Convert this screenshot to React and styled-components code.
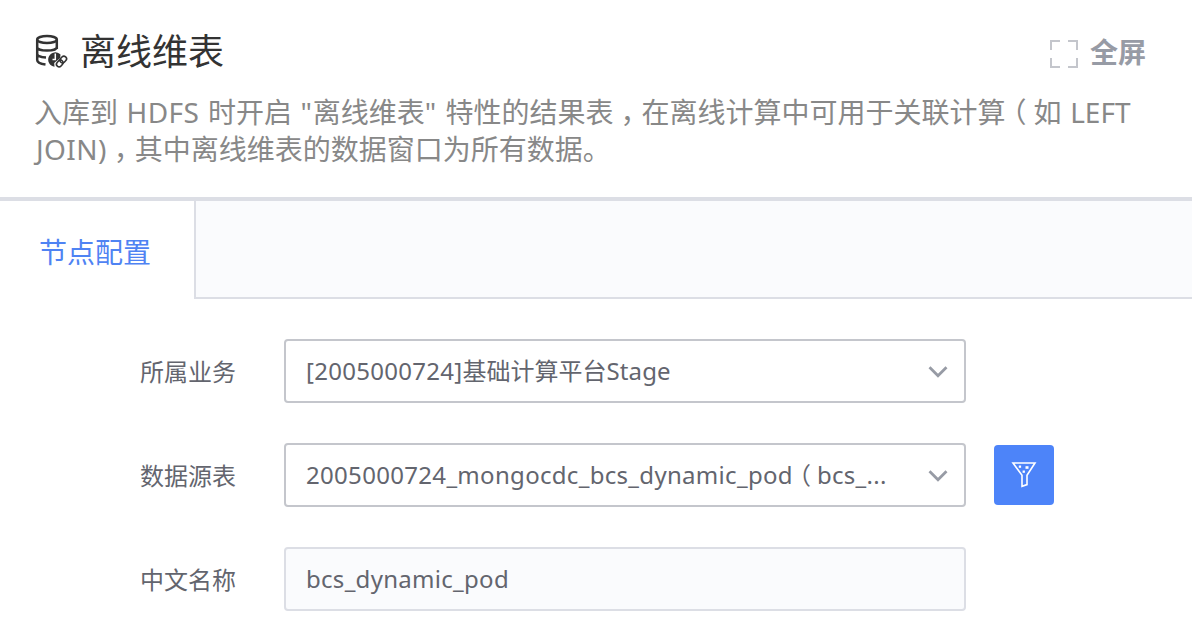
import React from 'react';
import styled, { createGlobalStyle } from 'styled-components';

const GlobalStyle = createGlobalStyle`
  * { box-sizing: border-box; }
  body {
    margin: 0;
    background: #fff;
    color: #63656e;
    font-family: "Noto Sans", "Noto Sans CJK SC", sans-serif;
    overflow: hidden;
  }
`;

const Page = styled.main`
  width: 1192px;
  height: 636px;
  overflow: hidden;
`;

const Header = styled.header`
  height: 201px;
  padding: 25px 34px 0;
  border-bottom: 4px solid #dcdee5;
`;

const TitleRow = styled.div`
  display: flex;
  align-items: center;
  height: 48px;

  > svg { margin-top: 3px; }
`;

const Title = styled.h1`
  margin: 0 0 0 12px;
  flex: 1;
  color: #333;
  font-size: 36px;
  font-weight: 400;
  line-height: 48px;
  font-family: "Noto Sans CJK SC", sans-serif;
`;

const FullScreen = styled.button`
  display: flex;
  align-items: center;
  gap: 11px;
  margin: 3px 12px 0 0;
  padding: 0;
  border: 0;
  background: none;
  color: #979ba5;
  font: 700 28px/40px "Noto Sans CJK SC", sans-serif;

  svg { margin-top: 7px; }
`;

const Description = styled.p`
  margin: 21px 0 0;
  color: #888;
  font-size: 28px;
  line-height: 37px;
  word-spacing: 1.3px;
  white-space: nowrap;
`;

const Line = styled.span`
  display: block;
  height: 37px;
`;

const Latin = styled.span`
  padding-left: ${(p) => p.$lead || 0}px;
  letter-spacing: ${(p) => p.$spacing || 0}px;
`;

const Mark = styled.span`
  padding: 0 0.25em;
  font-family: "Noto Sans CJK SC", sans-serif;
  font-feature-settings: "halt";
  line-height: 1;
`;

const Tabs = styled.nav`
  display: flex;
  height: 98px;
`;

const Tab = styled.div`
  width: 194px;
  padding-left: 39px;
  color: #4f83f3;
  font-size: 28px;
  line-height: 102px;
`;

const TabFill = styled.div`
  flex: 1;
  border-left: 2px solid #dcdee5;
  border-bottom: 2px solid #dcdee5;
  background: #fafbfd;
`;

const Form = styled.form`
  display: flex;
  flex-direction: column;
  gap: 40px;
  padding: 40px 0 0 140px;
`;

const Row = styled.div`
  display: flex;
  align-items: center;
  height: 64px;
`;

const Label = styled.label`
  width: 144px;
  padding-top: 2px;
  font-size: 24px;
  line-height: 62px;
`;

const Field = styled.div`
  display: flex;
  align-items: center;
  justify-content: space-between;
  width: 682px;
  height: 64px;
  padding: 0 16px 0 20px;
  border: 2px solid ${(p) => (p.$disabled ? '#dcdee5' : '#c4c6cc')};
  border-radius: 4px;
  background: ${(p) => (p.$disabled ? '#fafbfd' : '#fff')};
  font-size: 24px;
  line-height: 60px;
  white-space: nowrap;

  svg { margin-top: 2px; }
`;

const FilterButton = styled.button`
  display: flex;
  align-items: center;
  justify-content: center;
  width: 60px;
  height: 60px;
  margin-left: 28px;
  padding: 0 0 2px;
  border: 0;
  border-radius: 4px;
  background: #4d84f9;
`;

const DatabaseIcon = () => (
  <svg width="34" height="36" viewBox="0 0 34 36" fill="none">
    <g stroke="#333" strokeWidth="2.500">
      <ellipse cx="13" cy="6.500" rx="9.800" ry="3.600" />
      <path d="M3.200 6.500v20.500c0 2.500 4 4 8.300 4.600M22.800 6.500v9.500M3.200 14.200c0 2 4.400 3.400 9.800 3.400s9.800-1.400 9.800-3.400M3.200 20.800c0 2 3.800 3.400 8.800 3.700" />
    </g>
    <path d="M26.500 21.500A7.200 7.200 0 1 0 20.500 33.700l-.3-3.700 6-5z" fill="#333" />
    <path d="M21.300 20.500v6H18.500" stroke="#fff" strokeWidth="1.500" />
    <g stroke="#333" strokeWidth="1.600" transform="rotate(-48 27.500 28.500)">
      <rect x="21.300" y="25.900" width="7.200" height="5.200" rx="2.600" fill="#fff" />
      <rect x="26.500" y="25.900" width="7.200" height="5.200" rx="2.600" />
    </g>
  </svg>
);

const ExpandIcon = () => (
  <svg width="30" height="30" viewBox="0 0 30 30" fill="none" stroke="#c4c6cc" strokeWidth="2">
    <path d="M2 11V2h9M19 2h9v9M28 19v9h-9M11 28H2v-9" />
  </svg>
);

const Chevron = () => (
  <svg width="20" height="14" viewBox="0 0 20 14" fill="none" stroke="#979ba5" strokeWidth="2.800">
    <path d="M1.500 2.300 10 10.800l8.500-8.500" />
  </svg>
);

const FilterIcon = () => (
  <svg width="26" height="28" viewBox="0 0 26 28" fill="none" stroke="#fff" strokeWidth="1.600">
    <path d="M2 3h22l-8 12.300v9.300l-5 1.700v-11z" />
    <g fill="#fff" stroke="none">
      <rect x="7.800" y="5.500" width="2.300" height="2.300" />
      <rect x="14.500" y="6.200" width="3" height="2.600" />
      <rect x="11.600" y="10.500" width="2.300" height="2.300" />
    </g>
  </svg>
);

export default function App() {
  return (
    <Page>
      <GlobalStyle />
      <Header>
        <TitleRow>
          <DatabaseIcon />
          <Title>离线维表</Title>
          <FullScreen type="button">
            <ExpandIcon />
            全屏
          </FullScreen>
        </TitleRow>
        <Description>
          <Line>
            入库到 <Latin $spacing={0.4}>HDFS</Latin> 时开启 <Latin $spacing={0.8}>"</Latin>离线维表<Latin $spacing={0.8}>"</Latin> 特性的结果表<Mark>，</Mark>在离线计算中可用于关联计算<Mark>（</Mark>如 <Latin>LEFT</Latin>
          </Line>
          <Line>
            <Latin $lead={2} $spacing={0.4}>JOIN)</Latin><Mark>，</Mark>其中离线维表的数据窗口为所有数据。
          </Line>
        </Description>
      </Header>
      <Tabs>
        <Tab>节点配置</Tab>
        <TabFill />
      </Tabs>
      <Form>
        <Row>
          <Label>所属业务</Label>
          <Field>
            <span><Latin $spacing={0.29}>[2005000724]</Latin>基础计算平台<Latin $spacing={0.1}>Stage</Latin></span>
            <Chevron />
          </Field>
        </Row>
        <Row>
          <Label>数据源表</Label>
          <Field>
            <span><Latin $spacing={0.31}>2005000724_mongocdc_bcs_dynamic_pod</Latin><Mark>（</Mark><Latin $spacing={0.31}>bcs_...</Latin></span>
            <Chevron />
          </Field>
          <FilterButton type="button"><FilterIcon /></FilterButton>
        </Row>
        <Row>
          <Label>中文名称</Label>
          <Field $disabled><Latin $spacing={0.29}>bcs_dynamic_pod</Latin></Field>
        </Row>
      </Form>
    </Page>
  );
}
